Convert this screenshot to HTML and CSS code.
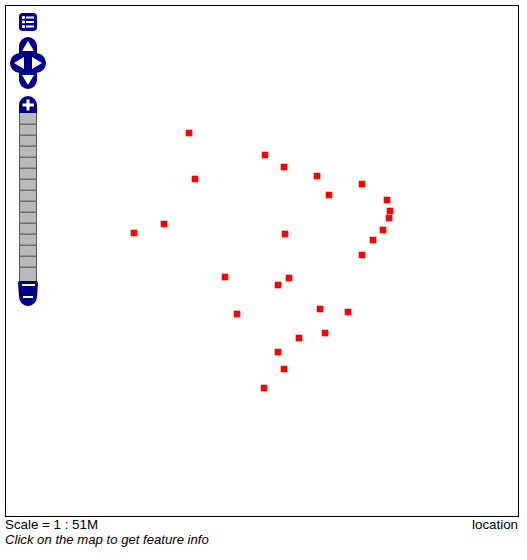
FILE: index.html
```html
<!DOCTYPE html>
<html lang="en">

<head>
    <meta charset="UTF-8">
    <title>map</title>
    <link rel="stylesheet" href="styles.css">
</head>

<body>
    <div class="map">
        <!-- points, in map pixels -->
        <svg class="points" width="512" height="510" viewBox="6 6 512 510">
            <g fill="#ff0000" stroke="#ff0000" stroke-width="0.6">
                <rect x="186" y="130" width="6" height="6"/>
                <rect x="262" y="152" width="6" height="6"/>
                <rect x="281" y="164" width="6" height="6"/>
                <rect x="314" y="173" width="6" height="6"/>
                <rect x="192" y="176" width="6" height="6"/>
                <rect x="326" y="192" width="6" height="6"/>
                <rect x="359" y="181" width="6" height="6"/>
                <rect x="384" y="197" width="6" height="6"/>
                <rect x="387" y="208" width="6" height="6"/>
                <rect x="386" y="215" width="6" height="6"/>
                <rect x="380" y="227" width="6" height="6"/>
                <rect x="370" y="237" width="6" height="6"/>
                <rect x="359" y="252" width="6" height="6"/>
                <rect x="282" y="231" width="6" height="6"/>
                <rect x="161" y="221" width="6" height="6"/>
                <rect x="131" y="230" width="6" height="6"/>
                <rect x="222" y="274" width="6" height="6"/>
                <rect x="286" y="275" width="6" height="6"/>
                <rect x="275" y="282" width="6" height="6"/>
                <rect x="234" y="311" width="6" height="6"/>
                <rect x="317" y="306" width="6" height="6"/>
                <rect x="345" y="309" width="6" height="6"/>
                <rect x="322" y="330" width="6" height="6"/>
                <rect x="296" y="335" width="6" height="6"/>
                <rect x="275" y="349" width="6" height="6"/>
                <rect x="281" y="366" width="6" height="6"/>
                <rect x="261" y="385" width="6" height="6"/>
            </g>
        </svg>

        <!-- layer list, pan and zoom controls -->
        <svg class="controls" width="50" height="310" viewBox="6 6 50 310">
            <rect x="19" y="13" width="18" height="18" rx="4" fill="#00008b"/>
            <g fill="#fff">
                <rect x="22" y="16" width="3" height="3" rx="1"/>
                <rect x="22" y="20.500" width="3" height="3" rx="1"/>
                <rect x="22" y="25" width="3" height="3" rx="1"/>
                <rect x="26" y="16.500" width="8" height="2"/>
                <rect x="26" y="21" width="8" height="2"/>
                <rect x="26" y="25.500" width="8" height="2"/>
            </g>

            <rect x="19" y="37" width="18" height="52" rx="9" fill="#00008b"/>
            <rect x="10" y="53" width="36" height="20" rx="10" fill="#00008b"/>
            <g fill="#fff">
                <path d="M28 41 L34 51 L22 51 Z"/>
                <path d="M28 85 L34 75 L22 75 Z"/>
                <path d="M14 63 L24 57 L24 69 Z"/>
                <path d="M42 63 L32 57 L32 69 Z"/>
            </g>

            <rect x="19" y="112" width="18" height="170" fill="#b9b9b9"/>
            <rect x="19" y="112" width="1" height="170" fill="#555"/>
            <rect x="36" y="112" width="1" height="170" fill="#555"/>
            <g fill="#6e6e6e">
                <rect x="19" y="123.500" width="18" height="1.500"/>
                <rect x="19" y="134.500" width="18" height="1.500"/>
                <rect x="19" y="145.500" width="18" height="1.500"/>
                <rect x="19" y="156.500" width="18" height="1.500"/>
                <rect x="19" y="167.500" width="18" height="1.500"/>
                <rect x="19" y="178.500" width="18" height="1.500"/>
                <rect x="19" y="189.500" width="18" height="1.500"/>
                <rect x="19" y="200.500" width="18" height="1.500"/>
                <rect x="19" y="211.500" width="18" height="1.500"/>
                <rect x="19" y="222.500" width="18" height="1.500"/>
                <rect x="19" y="233.500" width="18" height="1.500"/>
                <rect x="19" y="244.500" width="18" height="1.500"/>
                <rect x="19" y="255.500" width="18" height="1.500"/>
                <rect x="19" y="266.500" width="18" height="1.500"/>
            </g>

            <path d="M19 113 V105 A9 9 0 0 1 37 105 V113 Z" fill="#00008b"/>
            <path d="M26.500 99.500 H29.500 V103.500 H34 V106.500 H29.500 V110.500 H26.500 V106.500 H22.500 V103.500 H26.500 Z" fill="#fff"/>

            <path d="M20 281 H36 Q38 281 38 283 L37 297 A9 9 0 0 1 19 297 L18 283 Q18 281 20 281 Z" fill="#00008b"/>
            <rect x="22" y="284" width="13" height="2" fill="#fff"/>
            <rect x="23" y="296" width="10" height="2" fill="#fff"/>
        </svg>
    </div>

    <div class="status">
        <span>Scale = 1 : 51M</span>
        <span>location</span>
    </div>
    <div class="hint">Click on the map to get feature info</div>
</body>

</html>
```

FILE: styles.css
```css
body {
    margin: 5px;
    width: 514px;
    font-family: "Liberation Sans", Arial, sans-serif;
    font-size: 13.33px;
    line-height: 15px;
    color: #000;
    background-color: #fff;
}

.map {
    position: relative;
    width: 512px;
    height: 510px;
    border: 1px solid #000;
    background-color: #fff;
}

.points {
    display: block;
}

/* sits over the map in the top left corner */
.controls {
    position: absolute;
    top: 0;
    left: 0;
}

.status {
    display: flex;
    justify-content: space-between;
    padding-right: 1px;
}

.hint {
    font-size: 13.15px;
    font-style: italic;
}
```
